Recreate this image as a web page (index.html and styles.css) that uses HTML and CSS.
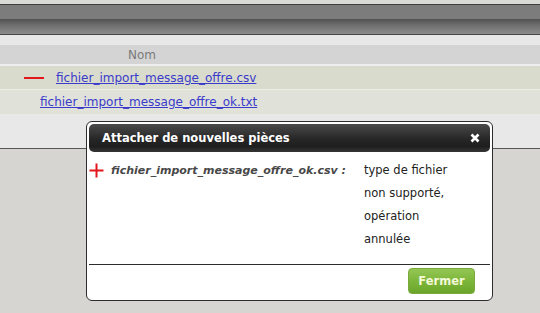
FILE: index.html
```html
<!DOCTYPE html>
<html lang="fr">
<head>
<meta charset="utf-8">
<link rel="stylesheet" href="styles.css">
</head>
<body>
<div class="top-strip"></div>
<div class="toolbar"><div class="toolbar-top"></div><div class="toolbar-bottom"></div></div>
<div class="list-area">
  <div class="list-head"><span class="col-nom">Nom</span></div>
  <div class="row row-a">
    <span class="dash"></span>
    <a class="file-link" href="#">fichier_import_message_offre.csv</a>
  </div>
  <div class="row row-b">
    <a class="file-link" href="#">fichier_import_message_offre_ok.txt</a>
  </div>
</div>
<div class="lower-area"></div>

<div class="dialog">
  <div class="dialog-head">
    <span class="dialog-title">Attacher de nouvelles pièces</span>
    <svg class="close" width="10" height="10" viewBox="0 0 10 10"><path d="M1.5 1.5 L8.5 8.5 M8.5 1.5 L1.5 8.5" stroke="#fff" stroke-width="2.6" stroke-linecap="butt"/></svg>
  </div>
  <div class="dialog-body">
    <svg class="plus" width="15" height="15" viewBox="0 0 15 15"><path d="M7.5 0.5 V14.5 M0.5 7.5 H14.5" stroke="#e3161b" stroke-width="2"/></svg>
    <span class="err-file">fichier_import_message_offre_ok.csv :</span>
    <span class="err-msg">type de fichier<br>non supporté,<br>opération<br>annulée</span>
  </div>
  <div class="dialog-foot">
    <button class="btn-close">Fermer</button>
  </div>
</div>
</body>
</html>
```
FILE: styles.css
```css
html, body { margin: 0; padding: 0; }
body {
  width: 540px;
  height: 313px;
  overflow: hidden;
  background: #d6d5d1;
  font-family: "DejaVu Sans", Verdana, sans-serif;
  position: relative;
}
.top-strip {
  height: 4px;
  background: #dadad6;
  border-bottom: 1px solid #3e3e3e;
}
.toolbar {
  height: 29px;
  border-bottom: 1px solid #474747;
  display: flex;
  flex-direction: column;
}
.toolbar-top {
  height: 14px;
  background: #7c7c7c;
}
.toolbar-bottom {
  flex: 1;
  background: linear-gradient(#515151, #6e6e6e 40%, #8c8c8c);
}
.list-area {
  background: #e8e8e8;
  padding-top: 10px;
  height: 103px;
  border-bottom: 1px solid #555;
}
.list-head {
  height: 19px;
  background: #d4d4d4;
  border-bottom: 2px solid #eeeeee;
  font-size: 12px;
  color: #7a7a7a;
  display: flex;
  align-items: center;
  padding-left: 128px;
}
.row {
  display: flex;
  align-items: center;
  font-size: 12px;
}
.row-a {
  height: 23px;
  background: #d9dccd;
  border-bottom: 1px solid #eceee6;
  padding-left: 24px;
}
.row-b {
  height: 24px;
  background: #e0e2d9;
  padding-left: 40px;
}
.dash {
  width: 20px;
  height: 2px;
  background: #e3161b;
  margin-right: 12px;
}
.file-link {
  color: #3a3acb;
  text-decoration: underline;
}
.lower-area { height: 164px; }

.dialog {
  position: absolute;
  left: 86px;
  top: 121px;
  width: 401px;
  height: 174px;
  padding: 2px;
  background: #fff;
  border: 1px solid #2c2c2c;
  border-radius: 6px;
  display: flex;
  flex-direction: column;
}
.dialog-head {
  height: 28px;
  flex: none;
  border-radius: 5px;
  background: linear-gradient(#4a4a4a, #262626 55%, #1e1e1e 80%, #353535);
  display: flex;
  align-items: center;
  justify-content: space-between;
  padding: 0 10px 0 13px;
}
.dialog-title {
  color: #fff;
  font-weight: bold;
  font-size: 11.5px;
}
.dialog-body {
  display: flex;
  align-items: flex-start;
  padding: 7px 0 0 0;
  border-bottom: 1px solid #2c2c2c;
  flex: 1;
}
.plus { margin-top: 4px; margin-right: 7px; flex: none; }
.err-file {
  width: 253px;
  font-style: italic;
  font-weight: bold;
  font-size: 11px;
  color: #484848;
  line-height: 23px;
}
.err-msg {
  font-size: 11.5px;
  color: #222;
  line-height: 23px;
}
.dialog-foot {
  flex: none;
  display: flex;
  justify-content: flex-end;
  padding: 3px 15px 4px 0;
}
.btn-close {
  width: 67px;
  height: 26px;
  border: 1px solid #7aaa3c;
  border-radius: 4px;
  background: linear-gradient(#93c655, #7db63a 50%, #6aa52b);
  color: #f4f9d8;
  font-family: "DejaVu Sans", Verdana, sans-serif;
  font-weight: bold;
  font-size: 11.5px;
  padding: 0;
}
```
